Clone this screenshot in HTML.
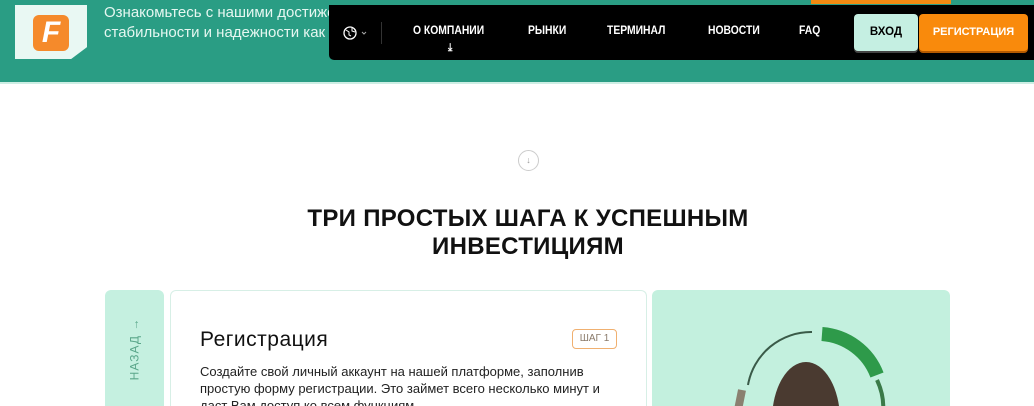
<!DOCTYPE html>
<html><head><meta charset="utf-8"><style>
*{margin:0;padding:0;box-sizing:border-box}
html,body{width:1034px;height:406px;overflow:hidden}
body{background:#fff;font-family:"Liberation Sans","Noto Sans CJK SC",sans-serif;position:relative}
.hdr{position:absolute;left:0;top:0;width:1034px;height:84px;background:#2a9d84;border-bottom:2px solid #cdeee4}
.ob{position:absolute;left:811px;top:0;width:140px;height:4px;background:#f28a12}
.logo{position:absolute;left:15px;top:5px;width:72px;height:54px;background:#e9f8f3;clip-path:polygon(0 0,100% 0,100% 78%,78% 100%,0 100%)}
.logo div{position:absolute;left:18px;top:10px;width:36px;height:36px;background:#f58a2b;border-radius:6px;color:#fff;font-weight:bold;font-style:italic;font-size:30px;line-height:36px;text-align:center}
.txt{position:absolute;left:104px;top:3px;color:#e6f7f1;font-size:15px;line-height:20px}
.nav{position:absolute;left:329px;top:5px;width:705px;height:55px;background:#000;border-radius:0 0 0 5px}
.nav span{position:absolute;top:20px;color:#fff;font-size:11.5px;font-weight:bold;transform:scaleX(.9);transform-origin:left}
.in{position:absolute;left:854px;top:14px;width:64px;height:37px;background:#c5efe2;border-radius:4px;color:#000;font-size:11.5px;font-weight:bold;text-align:center;line-height:37px;box-shadow:0 2px 0 #444}
.reg{position:absolute;left:919px;top:14px;width:109px;height:37px;background:#f98a0c;border-radius:4px;color:#fff;font-size:11px;font-weight:bold;text-align:center;line-height:37px;box-shadow:0 2px 0 #b55a00}
h1{position:absolute;left:0;width:1034px;top:205px;text-align:center;font-size:24px;line-height:28px;font-weight:bold;color:#111;letter-spacing:.3px;padding-left:22px}
.circ{position:absolute;left:518px;top:150px;width:21px;height:21px;border:1px solid #ccc;border-radius:50%;color:#999;font-size:9px;text-align:center;line-height:19px}
.back{position:absolute;left:105px;top:290px;width:59px;height:116px;background:#c5f0e0;border-radius:6px 6px 0 0}
.back span{position:absolute;left:-2px;top:52px;transform:rotate(-90deg);color:#5aa68a;font-size:12px;letter-spacing:1px;white-space:nowrap}
.card{position:absolute;left:170px;top:290px;width:477px;height:116px;background:#fff;border:1px solid #d7efe6;border-bottom:none;border-radius:6px 6px 0 0}
.card h2{position:absolute;left:29px;top:37px;font-size:21px;font-weight:normal;color:#111;letter-spacing:.5px}
.step{position:absolute;left:401px;top:38px;width:45px;height:20px;border:1px solid #f0b070;border-radius:4px;color:#8a7a6a;font-size:10px;text-align:center;line-height:18px}
.card p{position:absolute;left:29px;top:72px;width:420px;font-size:13px;line-height:17px;color:#222}
.img{position:absolute;left:652px;top:290px;width:298px;height:116px;background:#c3f0de;border-radius:6px 6px 0 0;overflow:hidden}
</style></head><body>
<div class="hdr"></div><div class="ob"></div>
<div class="logo"><div>F</div></div>
<div class="txt">Ознакомьтесь с нашими достижениями<br>стабильности и надежности как п</div>
<div class="nav">
<svg style="position:absolute;left:14px;top:20px" width="30" height="16"><circle cx="7" cy="8" r="6" fill="none" stroke="#fff" stroke-width="1.3"/><path d="M3 5l3 2 0 3 2 1M9 3l0 3 3 1" stroke="#fff" fill="none" stroke-width="1"/><path d="M19 7l2 2 2-2" stroke="#aaa" fill="none"/></svg>
<div style="position:absolute;left:52px;top:17px;width:1px;height:22px;background:#333"></div>
<span style="left:84px">О КОМПАНИИ</span>
<span style="left:119px;top:37px;font-size:11px">⤓</span>
<span style="left:199px">РЫНКИ</span>
<span style="left:278px">ТЕРМИНАЛ</span>
<span style="left:379px">НОВОСТИ</span>
<span style="left:470px">FAQ</span>
</div>
<div class="in">ВХОД</div><div class="reg">РЕГИСТРАЦИЯ</div>
<div class="circ">↓</div>
<h1>ТРИ ПРОСТЫХ ШАГА К УСПЕШНЫМ<br>ИНВЕСТИЦИЯМ</h1>
<div class="back"><span>НАЗАД →</span></div>
<div class="card"><h2>Регистрация</h2><div class="step">ШАГ 1</div>
<p>Создайте свой личный аккаунт на нашей платформе, заполнив простую форму регистрации. Это займет всего несколько минут и даст Вам доступ ко всем функциям.</p></div>
<div class="img"><svg width="298" height="116">
<path d="M96 95 A64 64 0 0 1 160 42" stroke="#3a5a48" stroke-width="2" fill="none"/>
<path d="M170 44 A64 64 0 0 1 225 85" stroke="#2e9a4a" stroke-width="14" fill="none"/>
<path d="M225 90 A64 64 0 0 1 230 130" stroke="#3a7a48" stroke-width="4" fill="none"/>
<path d="M90 100 l-6 30" stroke="#8a8070" stroke-width="8"/>
<ellipse cx="154" cy="130" rx="34" ry="58" fill="#4a3a30"/>
</svg></div>
</body></html>
